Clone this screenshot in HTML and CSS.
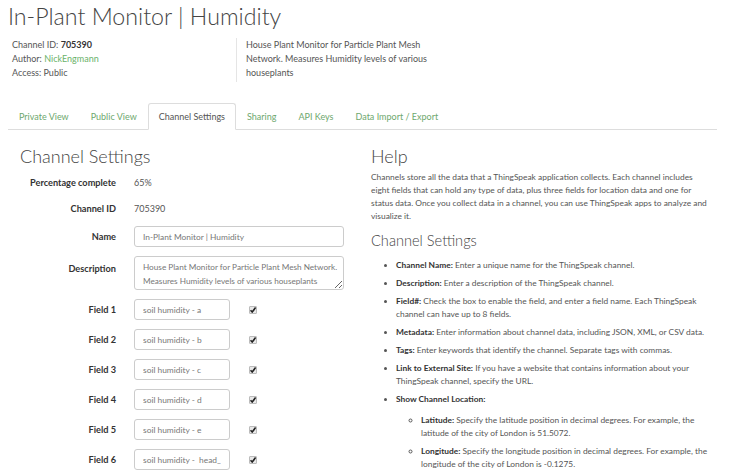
FILE: index.html
```html
<!DOCTYPE html>
<html lang="en">
<head>
  <meta charset="UTF-8">
  <title>In-Plant Monitor | Humidity - ThingSpeak</title>
  <link rel="stylesheet" href="styles.css">
</head>
<body>
  <div class="page">
    <h1 class="title">In-Plant Monitor | Humidity</h1>

    <!-- datos del canal -->
    <div class="info">
      <div class="info-meta">
        <p>Channel ID: <strong>705390</strong></p>
        <p>Author: <a href="#">NickEngmann</a></p>
        <p>Access: Public</p>
      </div>
      <div class="info-desc">
        House Plant Monitor for Particle Plant Mesh Network. Measures Humidity levels of various houseplants
      </div>
    </div>

    <ul class="tabs">
      <li><a href="#">Private View</a></li>
      <li><a href="#">Public View</a></li>
      <li class="active"><a href="#">Channel Settings</a></li>
      <li><a href="#">Sharing</a></li>
      <li><a href="#">API Keys</a></li>
      <li><a href="#">Data Import / Export</a></li>
    </ul>

    <div class="content">
      <div class="settings">
        <h2>Channel Settings</h2>
        <form class="form">
          <label>Percentage complete</label>
          <span class="value">65%</span>

          <label>Channel ID</label>
          <span class="value">705390</span>

          <label>Name</label>
          <input class="text-input wide" type="text" value="In-Plant Monitor | Humidity">

          <label class="label-desc">Description</label>
          <textarea class="text-input wide area" rows="2">House Plant Monitor for Particle Plant Mesh Network. Measures Humidity levels of various houseplants</textarea>

          <label>Field 1</label>
          <div class="field"><input class="text-input" type="text" value="soil humidity - a"><input class="check" type="checkbox" checked></div>

          <label>Field 2</label>
          <div class="field"><input class="text-input" type="text" value="soil humidity - b"><input class="check" type="checkbox" checked></div>

          <label>Field 3</label>
          <div class="field"><input class="text-input" type="text" value="soil humidity - c"><input class="check" type="checkbox" checked></div>

          <label>Field 4</label>
          <div class="field"><input class="text-input" type="text" value="soil humidity - d"><input class="check" type="checkbox" checked></div>

          <label>Field 5</label>
          <div class="field"><input class="text-input" type="text" value="soil humidity - e"><input class="check" type="checkbox" checked></div>

          <label>Field 6</label>
          <div class="field"><input class="text-input" type="text" value="soil humidity -  head_"><input class="check" type="checkbox" checked></div>
        </form>
      </div>

      <div class="help">
        <h2>Help</h2>
        <p>Channels store all the data that a ThingSpeak application collects. Each channel includes eight fields that can hold any type of data, plus three fields for location data and one for status data. Once you collect data in a channel, you can use ThingSpeak apps to analyze and visualize it.</p>

        <h3>Channel Settings</h3>
        <ul class="help-list">
          <li><b>Channel Name:</b> Enter a unique name for the ThingSpeak channel.</li>
          <li><b>Description:</b> Enter a description of the ThingSpeak channel.</li>
          <li><b>Field#:</b> Check the box to enable the field, and enter a field name. Each ThingSpeak channel can have up to 8 fields.</li>
          <li><b>Metadata:</b> Enter information about channel data, including JSON, XML, or CSV data.</li>
          <li><b>Tags:</b> Enter keywords that identify the channel. Separate tags with commas.</li>
          <li><b>Link to External Site:</b> If you have a website that contains information about your ThingSpeak channel, specify the URL.</li>
          <li><b>Show Channel Location:</b>
            <ul class="sub-list">
              <li><b>Latitude:</b> Specify the latitude position in decimal degrees. For example, the latitude of the city of London is 51.5072.</li>
              <li><b>Longitude:</b> Specify the longitude position in decimal degrees. For example, the longitude of the city of London is -0.1275.</li>
            </ul>
          </li>
        </ul>
      </div>
    </div>
  </div>
</body>
</html>
```

FILE: styles.css
```css
body {
    margin: 0;
    font-family: 'Lato', sans-serif;
    font-size: 9px;
    color: #555;
    background: #fff;
}

.page {
    padding: 0 8px;
}

.title {
    margin: 2px 0 0 0;
    font-size: 23.2px;
    font-weight: 300;
    color: #444;
    line-height: 28px;
}

/* cabecera con datos */
.info {
    display: flex;
    margin-top: 8px;
}

.info-meta {
    width: 224px;
    padding-left: 4px;
}

.info-meta p {
    margin: 0;
    line-height: 14px;
}

.info-meta strong {
    color: #333;
}

.info-meta a {
    color: #6ab26a;
    text-decoration: none;
}

.info-desc {
    border-left: 1px solid #e5e5e5;
    padding-left: 9px;
    width: 205px;
    line-height: 14px;
    padding-bottom: 2px;
}

/* pestañas */
.tabs {
    list-style: none;
    display: flex;
    margin: 21px 0 0 0;
    padding: 0;
    width: 709px;
    border-bottom: 1px solid #ddd;
}

.tabs li {
    margin-bottom: -1px;
}

.tabs a {
    display: block;
    padding: 0 10px;
    line-height: 25px;
    color: #6ea86e;
    text-decoration: none;
    border: 1px solid transparent;
    border-radius: 3px 3px 0 0;
}

.tabs .active a {
    color: #555;
    border-color: #ddd;
    border-bottom-color: #fff;
    background: #fff;
}

/* contenido */
.content {
    display: flex;
}

.settings {
    width: 363px;
    padding-left: 12px;
    box-sizing: border-box;
}

.settings h2,
.help h2 {
    margin: 15px 0 0 0;
    font-size: 18px;
    font-weight: 300;
    color: #444;
    line-height: 22px;
}

.form {
    display: grid;
    grid-template-columns: 96px 1fr;
    column-gap: 18px;
    row-gap: 9px;
    align-items: center;
    margin-top: 7px;
}

.form label {
    text-align: right;
    font-weight: bold;
    color: #333;
    font-size: 9.2px;
}

.form .value {
    line-height: 17px;
}

.form .label-desc {
    align-self: start;
    padding-top: 7px;
}

.text-input {
    font-family: 'Lato', sans-serif;
    font-size: 8.4px;
    color: #777;
    border: 1px solid #ccc;
    border-radius: 3px;
    padding: 0 8px;
    height: 21px;
    box-sizing: border-box;
    width: 96px;
    margin: 0;
}

.text-input.wide {
    width: 210px;
}

.text-input.area {
    height: 34px;
    padding: 3px 3px 3px 8px;
    font-size: 8.2px;
    line-height: 14px;
    resize: vertical;
    overflow: hidden;
}

.field {
    display: flex;
    align-items: center;
}

.check {
    appearance: none;
    -webkit-appearance: none;
    margin: 0 0 0 19px;
    width: 8px;
    height: 8px;
    border: 1px solid #bbb;
    border-radius: 1px;
    background: #e8e8e8 url("data:image/svg+xml,%3Csvg xmlns='http://www.w3.org/2000/svg' viewBox='0 0 8 8'%3E%3Cpath d='M1.5 4.2 L3.2 6 L6.6 1.6' fill='none' stroke='%23222' stroke-width='1.6'/%3E%3C/svg%3E") center / 8px 8px no-repeat;
}

/* ayuda */
.help {
    flex: 1;
    padding-right: 24px;
}

.help p {
    margin: 4px 0 0 0;
    line-height: 13px;
    font-size: 8.4px;
}

.help h3 {
    margin: 9px 0 0 0;
    font-size: 14.6px;
    font-weight: 300;
    color: #444;
}

.help-list {
    margin: 10px 0 0 0;
    padding-left: 25px;
    font-size: 8.4px;
}

.help-list li {
    line-height: 13px;
    margin-bottom: 5px;
}

.help-list b {
    color: #333;
}

.sub-list {
    list-style: circle;
    padding-left: 25px;
    margin-top: 8px;
}
```
